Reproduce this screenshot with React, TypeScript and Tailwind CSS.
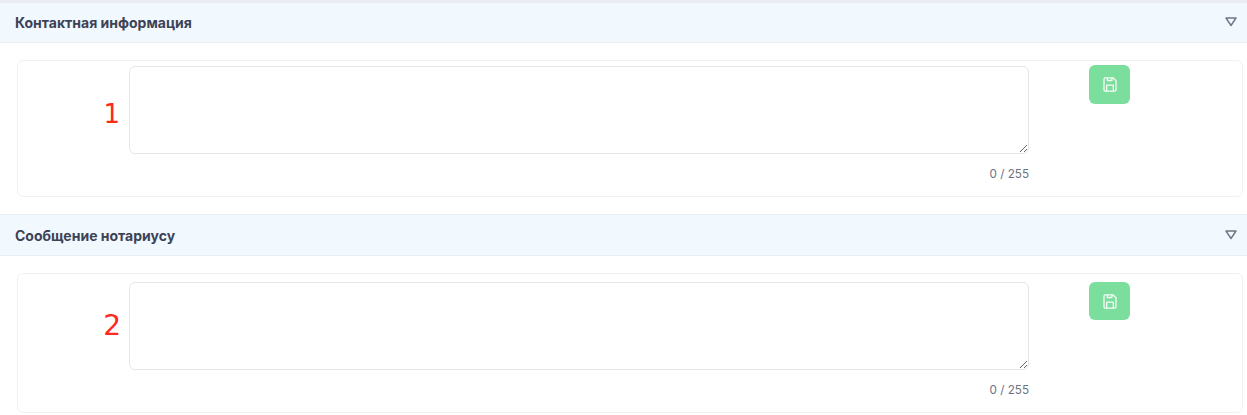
import React from "react";

function SaveIcon() {
  return (
    <svg width="16" height="17" viewBox="0 0 24 24" fill="none" stroke="#fff" strokeWidth="2" strokeLinecap="round" strokeLinejoin="round" className="opacity-90">
      <path d="M5 2h11.5L21 6.5V20a2 2 0 0 1-2 2H5a2 2 0 0 1-2-2V4a2 2 0 0 1 2-2z" />
      <path d="M7 22v-8a1 1 0 0 1 1-1h8a1 1 0 0 1 1 1v8" />
      <path d="M8 2v4h7V2" />
    </svg>
  );
}

function Section(props: {
  title: string;
  mark: string;
  headerH: string;
  cardH: string;
  fieldTop: string;
  btnTop: string;
  btnH: string;
  markTop: string;
  markSize: string;
  markRight: string;
}) {
  return (
    <section>
      <header className={`${props.headerH} flex items-center justify-between bg-[#f1f8fe] border-b border-[#e9eef3] pl-[15px] pr-[10px]`}>
        <h2 className="text-[14px] font-bold text-[#3c4356] leading-none pt-[1px]">{props.title}</h2>
        <svg width="12" height="10" viewBox="0 0 12 10" fill="none" stroke="#6f7585" strokeWidth="1.4" strokeLinejoin="round" className="-mt-[1px]">
          <path d="M1 1h10L6 8.5z" />
        </svg>
      </header>
      <div className={`mt-[17px] ml-[17px] mr-[4px] ${props.cardH} rounded-[6px] border border-[#f0f1f3] bg-white flex items-start`}>
        <div className={`w-[111px] shrink-0 flex justify-end ${props.markRight} ${props.markTop}`}>
          <span className={`text-[#ff2a1f] ${props.markSize} leading-none`} style={{ fontFamily: "'DejaVu Sans', sans-serif" }}>
            {props.mark}
          </span>
        </div>
        <div className={`w-[900px] shrink-0 ${props.fieldTop}`}>
          <textarea className="block w-full h-[88px] rounded-[6px] border border-[#e4e7ea] bg-white outline-none resize-y" />
          <div className="mt-[15px] text-right text-[11.7px] leading-none text-[#6d7480]">0 / 255</div>
        </div>
        <button className={`ml-[60px] ${props.btnTop} w-[41px] ${props.btnH} rounded-[6px] bg-[#7bde9c] flex items-center justify-center`}>
          <SaveIcon />
        </button>
      </div>
    </section>
  );
}

export default function App() {
  return (
    <div className="w-[1247px] h-[415px] overflow-hidden bg-white" style={{ fontFamily: "Inter, 'Noto Sans', sans-serif" }}>
      <div className="h-[3px] bg-[#e9edf1]" />
      <Section
        title="Контактная информация"
        mark="1"
        headerH="h-[40px]"
        cardH="h-[137px]"
        fieldTop="mt-[5px]"
        btnTop="mt-[4px]"
        btnH="h-[39px]"
        markTop="mt-[40px]"
        markSize="text-[26px]"
        markRight="pr-[9px]"
      />
      <div className="h-[17px]" />
      <Section
        title="Сообщение нотариусу"
        mark="2"
        headerH="h-[42px] border-t border-t-[#e9eef3]"
        cardH="h-[140px]"
        fieldTop="mt-[8px]"
        btnTop="mt-[8px]"
        btnH="h-[38px]"
        markTop="mt-[38px]"
        markSize="text-[28px]"
        markRight="pr-[8px]"
      />
    </div>
  );
}
